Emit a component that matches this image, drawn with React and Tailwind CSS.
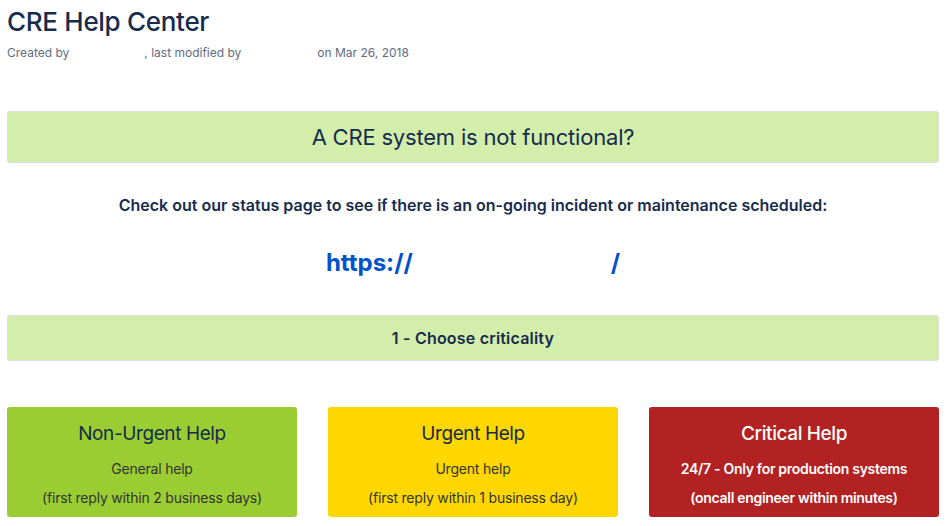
import React from "react";

export default function App() {
  return (
    <div className="w-[949px] h-[526px] overflow-hidden bg-white text-[#172B4D]" style={{ fontFamily: "Inter, 'Noto Sans', sans-serif" }}>
      <div className="pl-[7px] pr-[10px] pt-[6px]">
        <h1 className="text-[26px] leading-[32px] font-medium tracking-[-0.3px] text-[#172B4D]">CRE Help Center</h1>
        <div className="mt-[7px] text-[12px] leading-[16px] text-[#5E6C84] flex">
          <span>Created by </span>
          <span className="w-[75px]"></span>
          <span>, last modified by </span>
          <span className="w-[76px]"></span>
          <span>on Mar 26, 2018</span>
        </div>

        <div className="mt-[50px] h-[52px] rounded-[3px] border border-[#dddddd] bg-[#D3EEAB] flex items-center justify-center">
          <span className="text-[22px] tracking-[-0.2px] text-[#172B4D]">A CRE system is not functional?</span>
        </div>

        <div className="mt-[32px] text-center text-[16px] leading-[20px] font-semibold tracking-[0px] text-[#172B4D]">
          Check out our status page to see if there is an on-going incident or maintenance scheduled:
        </div>

        <div className="mt-[34px] flex justify-center text-[24px] leading-[28px] font-bold text-[#0052CC]">
          <span>https://</span>
          <span className="w-[198px]"></span>
          <span>/</span>
        </div>

        <div className="mt-[38px] h-[46px] rounded-[3px] border border-[#dddddd] bg-[#D3EEAB] flex items-center justify-center">
          <span className="text-[16px] font-semibold tracking-[0.2px] text-[#172B4D]">1 - Choose criticality</span>
        </div>

        <div className="mt-[46px] grid grid-cols-3 gap-[31px]">
          <div className="h-[110px] rounded-[3px] bg-[#9ACD32] flex flex-col items-center pt-[15px] text-[#172B4D]">
            <div className="text-[19px] leading-[24px] tracking-[-0.4px]">Non-Urgent Help</div>
            <div className="mt-[13px] text-[14px] leading-[20px] tracking-[-0.2px] text-[#333]">General help</div>
            <div className="mt-[9px] text-[14px] leading-[20px] tracking-[-0.2px] text-[#333]">(first reply within 2 business days)</div>
          </div>
          <div className="h-[110px] rounded-[3px] bg-[#FFD700] flex flex-col items-center pt-[15px] text-[#172B4D]">
            <div className="text-[19px] leading-[24px] tracking-[-0.4px]">Urgent Help</div>
            <div className="mt-[13px] text-[14px] leading-[20px] tracking-[-0.2px] text-[#333]">Urgent help</div>
            <div className="mt-[9px] text-[14px] leading-[20px] tracking-[-0.2px] text-[#333]">(first reply within 1 business day)</div>
          </div>
          <div className="h-[110px] rounded-[3px] bg-[#B22222] flex flex-col items-center pt-[15px] text-white">
            <div className="text-[19px] leading-[24px] tracking-[-0.4px] font-medium">Critical Help</div>
            <div className="mt-[13px] text-[14px] leading-[20px] tracking-[-0.3px] font-semibold">24/7 - Only for production systems</div>
            <div className="mt-[9px] text-[14px] leading-[20px] tracking-[-0.3px] font-semibold">(oncall engineer within minutes)</div>
          </div>
        </div>
      </div>
    </div>
  );
}
